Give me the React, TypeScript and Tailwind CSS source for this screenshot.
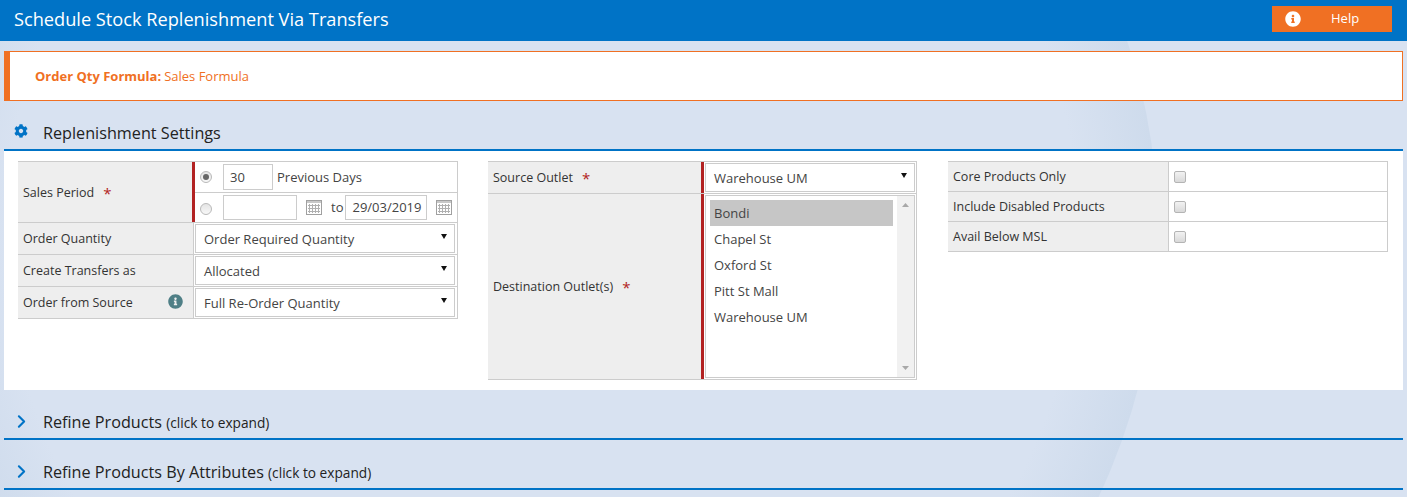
import { ChevronRight } from 'lucide-react';
import { FaCog, FaInfoCircle } from 'react-icons/fa';

const outlets = ['Bondi', 'Chapel St', 'Oxford St', 'Pitt St Mall', 'Warehouse UM'];
const flags = ['Core Products Only', 'Include Disabled Products', 'Avail Below MSL'];

function Required() {
  return <span className="text-[#b22222] text-[15px] leading-none">*</span>;
}

function Radio({ checked, className = '' }: { checked?: boolean; className?: string }) {
  return (
    <span className={`w-[12px] h-[12px] shrink-0 rounded-full border border-[#b9b9b9] bg-gradient-to-b from-[#e4e4e4] to-[#f8f8f8] flex items-center justify-center ${className}`}>
      {checked && <span className="w-[6px] h-[6px] rounded-full bg-[#666]" />}
    </span>
  );
}

function Checkbox() {
  return <span className="block w-[12px] h-[12px] rounded-[2px] border border-[#b4b4b4] bg-gradient-to-b from-[#f2f2f2] to-[#d9d9d9]" />;
}

function Arrow() {
  return (
    <svg width="6" height="5" viewBox="0 0 6 5" className="shrink-0 -mt-[4px]">
      <path d="M0 0h6L3 5z" fill="#111" />
    </svg>
  );
}

function SelectBox({ value, className }: { value: string; className: string }) {
  return (
    <div className={`flex items-center justify-between border border-[#ccc] bg-white pl-[8px] pr-[7px] text-[13px] text-[#444] ${className}`}>
      <span className="mt-[3px]">{value}</span>
      <Arrow />
    </div>
  );
}

function CalendarIcon() {
  return (
    <svg width="16" height="15" viewBox="0 0 16 15" className="block shrink-0">
      <rect x="0.5" y="0.5" width="15" height="14" fill="#fff" stroke="#a0a0a0" />
      <rect x="1" y="1" width="14" height="2" fill="#c8c8c8" />
      <path d="M3.5 4v9M6.5 4v9M9.5 4v9M12.5 4v9M2 5.5h12M2 8.5h12M2 11.5h12" stroke="#b0b0b0" strokeWidth="1" />
    </svg>
  );
}

function CollapsedSection({ title, className }: { title: string; className: string }) {
  return (
    <div className={`flex items-center h-[30px] border-b-2 border-[#0073c6] ${className}`}>
      <ChevronRight className="w-[21px] h-[21px] ml-[7px] -mt-[5px] text-[#0073c6]" strokeWidth={2.4} />
      <span className="ml-[11px] text-[16.2px] text-[#222] -mt-[4px]">
        {title} <span className="text-[13.7px]">(click to expand)</span>
      </span>
    </div>
  );
}

export default function App() {
  return (
    <div className="relative h-[497px] overflow-hidden bg-[#d8e2f1] font-['Open_Sans',sans-serif] text-[12.5px] text-[#333]">
      {/* Faint curve in the page background */}
      <svg className="absolute inset-0" width="1407" height="497" viewBox="0 0 1407 497">
        <defs>
          <radialGradient id="swoosh" gradientUnits="userSpaceOnUse" cx="542" cy="233" r="616">
            <stop offset="0.87" stopColor="#cedbec" stopOpacity="0" />
            <stop offset="1" stopColor="#cedbec" stopOpacity="1" />
          </radialGradient>
        </defs>
        <circle cx="542" cy="233" r="616" fill="url(#swoosh)" />
      </svg>

      <div className="relative">
        <header className="h-[41px] bg-[#0073c6] flex items-center justify-between pl-[14px] pr-[15px]">
          <h1 className="text-[18.2px] text-white -mt-[2px]">Schedule Stock Replenishment Via Transfers</h1>
          <button className="w-[120px] h-[26px] -mt-[4px] bg-[#f07023] text-white text-[13px] flex items-center pl-[13px]">
            <FaInfoCircle className="w-[16px] h-[16px]" />
            <span className="ml-[30px]">Help</span>
          </button>
        </header>

        <div className="mx-[4px]">
          <div className="mt-[10px] h-[50px] flex items-center bg-white border border-[#f07023] border-l-[6px] pl-[25px] text-[13px] text-[#f07023]">
            <span className="font-bold mt-[1px]">Order Qty Formula:</span>
            <span className="ml-[3px] mt-[1px]">Sales Formula</span>
          </div>

          <div className="h-[50px] flex items-center border-b-2 border-[#0073c6] pt-[15px]">
            <FaCog className="w-[14px] h-[14px] ml-[10px] -mt-[4px] text-[#0073c6]" />
            <span className="ml-[15px] mt-[2px] text-[16.2px] text-[#222]">Replenishment Settings</span>
          </div>

          <div className="h-[239px] bg-white pt-[10px] pl-[14px] flex items-start">
            {/* Sales period and order settings */}
            <div className="w-[440px] border-t border-r border-b border-[#ccc]">
              <div className="flex h-[61px] border-b border-[#ccc]">
                <div className="w-[174px] bg-[#eee] flex items-center gap-[9px] pl-[5px] pt-[2px]">
                  Sales Period <Required />
                </div>
                <div className="flex-1 border-l-[3px] border-[#b22222]">
                  <div className="h-[31px] flex items-center border-b border-[#ccc] pl-[5px]">
                    <Radio checked />
                    <div className="ml-[11px] w-[50px] h-[26px] border border-[#ccc] flex items-center pl-[6px] pt-[2px] text-[13px] text-[#444]">30</div>
                    <span className="ml-[4px] mt-[2px] text-[13px] text-[#444]">Previous Days</span>
                  </div>
                  <div className="h-[29px] flex items-center pl-[5px]">
                    <Radio className="mt-[2px]" />
                    <div className="ml-[11px] w-[74px] h-[25px] border border-[#ccc]" />
                    <span className="ml-[9px]"><CalendarIcon /></span>
                    <span className="ml-[9px] text-[13px] text-[#444]">to</span>
                    <div className="ml-[2px] w-[82px] h-[25px] border border-[#ccc] flex items-center pl-[6px] text-[13px] text-[#444]">29/03/2019</div>
                    <span className="ml-[9px]"><CalendarIcon /></span>
                  </div>
                </div>
              </div>
              <div className="flex h-[32px] border-b border-[#ccc]">
                <div className="w-[175px] bg-[#eee] flex items-center pl-[5px] pt-[2px]">Order Quantity</div>
                <div className="flex-1 border-l border-[#ccc] flex items-center pl-[1px] pr-[2px]">
                  <SelectBox value="Order Required Quantity" className="w-full h-[29px]" />
                </div>
              </div>
              <div className="flex h-[32px] border-b border-[#ccc]">
                <div className="w-[175px] bg-[#eee] flex items-center pl-[5px] pt-[2px]">Create Transfers as</div>
                <div className="flex-1 border-l border-[#ccc] flex items-center pl-[1px] pr-[2px]">
                  <SelectBox value="Allocated" className="w-full h-[29px]" />
                </div>
              </div>
              <div className="flex h-[31px]">
                <div className="w-[175px] bg-[#eee] flex items-center justify-between pl-[5px] pr-[10px] pt-[2px]">
                  Order from Source
                  <FaInfoCircle className="w-[15px] h-[15px] -mt-[5px] text-[#4f7f86]" />
                </div>
                <div className="flex-1 border-l border-[#ccc] flex items-center pl-[1px] pr-[2px]">
                  <SelectBox value="Full Re-Order Quantity" className="w-full h-[29px]" />
                </div>
              </div>
            </div>

            {/* Outlets */}
            <div className="ml-[30px] w-[429px] border-t border-r border-b border-[#ccc]">
              <div className="flex h-[32px] border-b border-[#ccc]">
                <div className="w-[213px] bg-[#eee] flex items-center gap-[9px] pl-[5px] pt-[2px]">
                  Source Outlet <Required />
                </div>
                <div className="flex-1 border-l-[3px] border-[#b22222] flex items-center pl-[1px] pr-[1px]">
                  <SelectBox value="Warehouse UM" className="w-full h-[29px]" />
                </div>
              </div>
              <div className="flex h-[185px]">
                <div className="w-[213px] bg-[#eee] flex items-center gap-[9px] pl-[5px] pt-[2px]">
                  Destination Outlet(s) <Required />
                </div>
                <div className="flex-1 border-l-[3px] border-[#b22222] pl-[1px] pr-[1px] pt-[1px]">
                  <div className="h-[183px] border border-[#ccc] flex text-[13px] text-[#444]">
                    <div className="flex-1 pt-[4px] pl-[4px] pr-[4px]">
                      {outlets.map((outlet, i) => (
                        <div key={outlet} className={`h-[26px] flex items-center pl-[4px] pt-[2px] ${i === 0 ? 'bg-[#c6c6c6]' : ''}`}>
                          {outlet}
                        </div>
                      ))}
                    </div>
                    <div className="w-[17px] bg-[#f1f1f1] flex flex-col items-center justify-between py-[7px]">
                      <svg width="7" height="4" viewBox="0 0 7 4"><path d="M0 4h7L3.5 0z" fill="#a8a8a8" /></svg>
                      <svg width="7" height="4" viewBox="0 0 7 4"><path d="M0 0h7L3.5 4z" fill="#a8a8a8" /></svg>
                    </div>
                  </div>
                </div>
              </div>
            </div>

            {/* Product flags */}
            <div className="ml-[31px] w-[440px] border-t border-r border-[#ccc]">
              {flags.map((flag) => (
                <div key={flag} className="flex h-[30px] border-b border-[#ccc]">
                  <div className="w-[220px] bg-[#eee] flex items-center pl-[5px] pt-[2px]">{flag}</div>
                  <div className="flex-1 border-l border-[#ccc] flex items-center pl-[5px]">
                    <Checkbox />
                  </div>
                </div>
              ))}
            </div>
          </div>

          <CollapsedSection title="Refine Products" className="mt-[20px]" />
          <CollapsedSection title="Refine Products By Attributes" className="mt-[20px]" />
        </div>
      </div>
    </div>
  );
}
